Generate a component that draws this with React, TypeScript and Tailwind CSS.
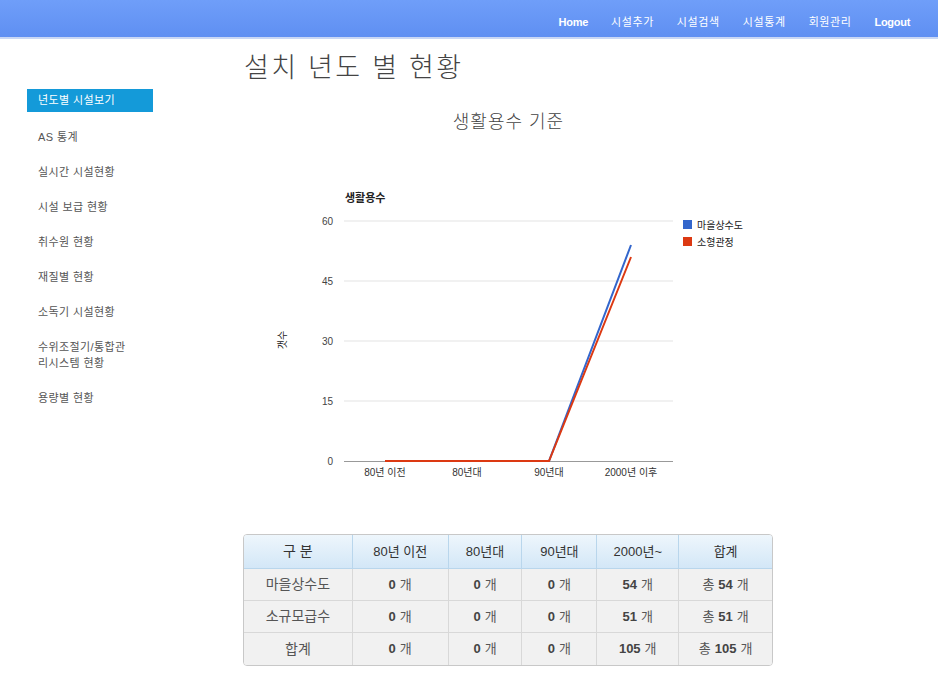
import React from 'react'

const FONT = { fontFamily: '"Liberation Sans", "Noto Sans CJK KR", sans-serif' }

const navItems = [
  { label: 'Home', bold: true },
  { label: '시설추가' },
  { label: '시설검색' },
  { label: '시설통계' },
  { label: '회원관리' },
  { label: 'Logout', bold: true },
]

const menu = [
  '년도별 시설보기',
  'AS 통계',
  '실시간 시설현황',
  '시설 보급 현황',
  '취수원 현황',
  '재질별 현황',
  '소독기 시설현황',
  '수위조절기/통합관\n리시스템 현황',
  '용량별 현황',
]

const columns = ['구 분', '80년 이전', '80년대', '90년대', '2000년~', '합계']
const colWidths = ['w-[109px]', 'w-[96px]', 'w-[74px]', 'w-[75px]', 'w-[82px]', 'w-[93px]']

const rows = [
  { name: '마을상수도', values: ['0', '0', '0', '54'], total: '54' },
  { name: '소규모급수', values: ['0', '0', '0', '51'], total: '51' },
  { name: '합계', values: ['0', '0', '0', '105'], total: '105' },
]

// chart coordinates are relative to the svg (page x - 243, page y - 150)
function Chart() {
  const ox = 243
  const oy = 150
  const y0 = 461
  const ticks = [60, 45, 30, 15, 0]
  const xs = [385, 467, 549, 631]
  const labels = ['80년 이전', '80년대', '90년대', '2000년 이후']
  const yOf = (v: number) => y0 - v * 4
  const pts = (vals: number[]) => vals.map((v, i) => `${xs[i] - ox},${yOf(v) - oy}`).join(' ')

  return (
    <svg width={529} height={350} className="block" style={FONT}>
      <text x={345 - ox} y={202 - oy} fontSize={11} fontWeight={700} fill="#222">
        생활용수
      </text>
      {ticks.map((t) => (
        <g key={t}>
          {t !== 0 && (
            <line x1={344 - ox} x2={673 - ox} y1={yOf(t) - oy} y2={yOf(t) - oy} stroke="#e3e3e3" strokeWidth={1} />
          )}
          <text x={333 - ox} y={yOf(t) - oy + 4} fontSize={10} fill="#444" textAnchor="end">
            {t}
          </text>
        </g>
      ))}
      <line x1={344 - ox} x2={673 - ox} y1={y0 - oy + 0.5} y2={y0 - oy + 0.5} stroke="#999" strokeWidth={1} />
      {labels.map((l, i) => (
        <text key={l} x={xs[i] - ox} y={476 - oy} fontSize={10} fill="#333" textAnchor="middle">
          {l}
        </text>
      ))}
      <text
        x={0}
        y={0}
        fontSize={10}
        fill="#222"
        textAnchor="middle"
        transform={`translate(${286 - ox},${340 - oy}) rotate(-90)`}
      >
        갯수
      </text>
      <polyline points={pts([0, 0, 0, 54])} fill="none" stroke="#3366cc" strokeWidth={2} />
      <polyline points={pts([0, 0, 0, 51])} fill="none" stroke="#dc3912" strokeWidth={2} />
      <rect x={683 - ox} y={220 - oy} width={9} height={9} fill="#3366cc" />
      <text x={697 - ox} y={229 - oy} fontSize={10} fill="#222">
        마을상수도
      </text>
      <rect x={683 - ox} y={237 - oy} width={9} height={9} fill="#dc3912" />
      <text x={697 - ox} y={246 - oy} fontSize={10} fill="#222">
        소형관정
      </text>
    </svg>
  )
}

export default function App() {
  return (
    <div className="min-h-[682px] w-[938px] bg-white" style={FONT}>
      {/* Top nav */}
      <div className="h-[39px] bg-gradient-to-b from-[#6f9ef9] to-[#5f8ff2] border-b-2 border-[#c9d7f5] flex items-center justify-end pt-[7px] pr-[28px] gap-[23px]">
        {navItems.map((n) => (
          <span
            key={n.label}
            className={`text-[11px] text-white ${n.bold ? 'font-bold tracking-[-0.3px]' : 'tracking-[0.6px]'}`}
          >
            {n.label}
          </span>
        ))}
      </div>

      <div className="flex">
        {/* Sidebar */}
        <div className="w-[243px] pl-[27px] pt-[50px]">
          <ul className="w-[126px]">
            {menu.map((m, i) => (
              <li
                key={m}
                className={
                  i === 0
                    ? 'h-[23px] bg-[#149ad9] text-white text-[11px] pl-[11px] flex items-center mb-[12px] tracking-[0.4px]'
                    : 'text-[11px] text-[#555] pl-[11px] py-[5px] mb-[9px] whitespace-pre-line leading-[16px] tracking-[0.4px]'
                }
              >
                {m}
              </li>
            ))}
          </ul>
        </div>

        {/* Main */}
        <div className="w-[529px]">
          <h1 className="text-[27px] font-light text-[#444] tracking-[2.3px] pt-[11px] leading-[36px] pl-[1px]">
            설치 년도 별 현황
          </h1>
          <h2 className="text-center text-[18px] font-light text-[#444] mt-[23px] leading-[26px] pl-[2px] tracking-[1px]">
            생활용수 기준
          </h2>
          <div className="mt-[15px]">
            <Chart />
          </div>

          {/* Table */}
          <div className="mt-[34px] border border-[#c8c8c8] rounded-[4px] overflow-hidden w-[530px]">
            <div className="flex h-[34px] bg-gradient-to-b from-[#eef6fc] to-[#d3e7f7] border-b border-[#b9d6ec]">
              {columns.map((c, i) => (
                <div
                  key={c}
                  className={`${colWidths[i]} flex items-center justify-center text-[#333] ${
                    i === 0 ? 'text-[14px]' : 'text-[13px]'
                  } ${i < columns.length - 1 ? 'border-r border-[#b9d6ec]' : ''}`}
                >
                  {c}
                </div>
              ))}
            </div>
            {rows.map((r, ri) => (
              <div
                key={r.name}
                className={`flex h-[32px] bg-[#f1f1f1] ${ri < rows.length - 1 ? 'border-b border-[#d8d8d8]' : ''}`}
              >
                <div className="w-[109px] flex items-center justify-center text-[14px] text-[#555] border-r border-[#d8d8d8]">
                  {r.name}
                </div>
                {r.values.map((v, vi) => (
                  <div
                    key={vi}
                    className={`${colWidths[vi + 1]} flex items-center justify-center text-[13px] text-[#555] border-r border-[#d8d8d8]`}
                  >
                    <b className="text-[#444] mr-[4px]">{v}</b>개
                  </div>
                ))}
                <div className="w-[93px] flex items-center justify-center text-[13px] text-[#555]">
                  총<b className="text-[#444] mx-[4px]">{r.total}</b>개
                </div>
              </div>
            ))}
          </div>
        </div>
      </div>
    </div>
  )
}
